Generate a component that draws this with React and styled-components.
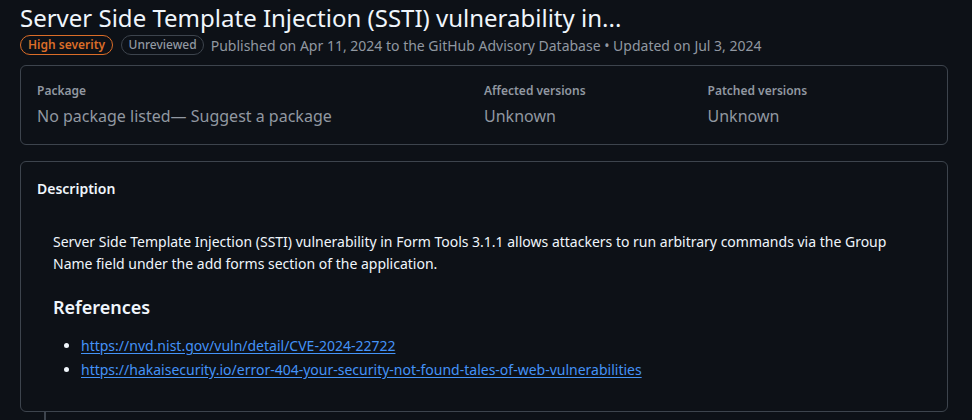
import React from 'react'
import styled, { createGlobalStyle } from 'styled-components'

const GlobalStyle = createGlobalStyle`
	body {
		margin: 0;
		background: #0d1117;
		font-family: 'Noto Sans', 'Liberation Sans', sans-serif;
		color: #f0f6fc;
		overflow: hidden;
	}
`

const Page = styled.div`
	padding: 3px 24px 0 20px;
`

const Title = styled.h2`
	margin: 0;
	font-size: 24px;
	font-weight: 400;
	line-height: 30px;
	color: #f0f6fc;
	white-space: nowrap;
`

const MetaRow = styled.div`
	display: flex;
	align-items: center;
	gap: 8px;
	margin-top: 2px;
	font-size: 14px;
	color: #9198a1;
	span:last-child {
		margin-left: -1px;
	}
`

const Label = styled.span`
	display: inline-flex;
	align-items: center;
	height: 20px;
	box-sizing: border-box;
	padding: 0 ${props => (props.strong ? '6.5px' : '6px')} 0 7px;
	border: 1px solid ${props => props.color || '#3d444d'};
	border-radius: 2em;
	font-size: 12px;
	font-weight: ${props => (props.strong ? 600 : 500)};
	line-height: 18px;
	color: ${props => props.color || '#9198a1'};
`

const Box = styled.div`
	border: 1px solid #3d444d;
	border-radius: 6px;
	margin-top: ${props => props.top}px;
`

const InfoGrid = styled.div`
	display: grid;
	grid-template-columns: 2fr 1fr 1fr;
	padding: 16px;
`

const InfoLabel = styled.div`
	font-size: 12px;
	font-weight: 600;
	line-height: 18px;
	color: #9198a1;
	margin-bottom: 4px;
`

const InfoValue = styled.div`
	font-size: 16px;
	line-height: 24px;
	color: #9198a1;
`

const BoxHeader = styled.div`
	padding: 16px 16px 0;
	font-size: 14px;
	font-weight: 600;
	line-height: 21px;
`

const Markdown = styled.div`
	padding: 32px 32px 30px;
	font-size: 14px;
	line-height: 22px;
	color: #f0f6fc;

	p {
		margin: 0 0 16px;
	}
	h3 {
		margin: 20px 0 16px;
		font-size: 18px;
		font-weight: 600;
		line-height: 24px;
	}
	ul {
		margin: 0;
		padding-left: 2em;
	}
	li + li {
		margin-top: 2px;
	}
	a {
		color: #4493f8;
		text-decoration: underline;
		text-underline-offset: 2px;
	}
`

const Timeline = styled.div`
	margin-left: 24px;
	height: 40px;
	border-left: 2px solid #3d444d;
`

const references = [
	'https://nvd.nist.gov/vuln/detail/CVE-2024-22722',
	'https://hakaisecurity.io/error-404-your-security-not-found-tales-of-web-vulnerabilities',
]

export default function App() {
	return (
		<Page>
			<GlobalStyle />
			<Title>Server Side Template Injection (SSTI) vulnerability in...</Title>
			<MetaRow>
				<Label color="#db6d28" strong>High severity</Label>
				<Label>Unreviewed</Label>
				<span>
					Published on Apr 11, 2024 to the GitHub Advisory Database • Updated on Jul 3, 2024
				</span>
			</MetaRow>
			<Box top={10}>
				<InfoGrid>
					<div>
						<InfoLabel>Package</InfoLabel>
						<InfoValue>No package listed— Suggest a package</InfoValue>
					</div>
					<div>
						<InfoLabel>Affected versions</InfoLabel>
						<InfoValue>Unknown</InfoValue>
					</div>
					<div>
						<InfoLabel>Patched versions</InfoLabel>
						<InfoValue>Unknown</InfoValue>
					</div>
				</InfoGrid>
			</Box>
			<Box top={16}>
				<BoxHeader>Description</BoxHeader>
				<Markdown>
					<p>
						Server Side Template Injection (SSTI) vulnerability in Form Tools 3.1.1 allows
						attackers to run arbitrary commands via the Group Name field under the add forms
						section of the application.
					</p>
					<h3>References</h3>
					<ul>
						{references.map(url => (
							<li key={url}>
								<a href={url}>{url}</a>
							</li>
						))}
					</ul>
				</Markdown>
			</Box>
			<Timeline />
		</Page>
	)
}
